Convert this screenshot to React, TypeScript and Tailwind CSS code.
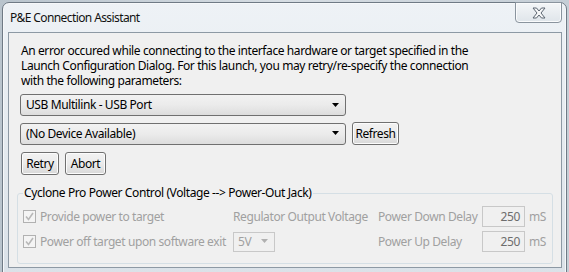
import React from 'react';

const font = { fontFamily: '"Noto Sans", "Open Sans", Arial, sans-serif' };

function Arrow({ color = '#000' }: { color?: string }) {
  return (
    <svg width="8" height="5" viewBox="0 0 8 5">
      <path d="M0 0 H7 L3.5 4 Z" fill={color} />
    </svg>
  );
}

function Combo({ label, width }: { label: string; width: string }) {
  return (
    <div
      className={`${width} h-[22px] flex items-center justify-between pl-[5px] pr-[5px] rounded-[3px] border border-[#707070] bg-gradient-to-b from-[#f2f2f2] via-[#ebebeb] to-[#dddddd] text-[12px] text-black`}
    >
      <span>{label}</span>
      <Arrow />
    </div>
  );
}

function Button({ label, width }: { label: string; width: string }) {
  return (
    <div
      className={`${width} h-[23px] flex items-center justify-center rounded-[3px] border border-[#707070] bg-gradient-to-b from-[#f2f2f2] via-[#ebebeb] to-[#d8d8d8] text-[12px] text-black shadow-[inset_0_0_0_1px_#fcfcfc]`}
    >
      {label}
    </div>
  );
}

function Check({ label }: { label: string }) {
  return (
    <div className="flex items-center gap-[4px] text-[12px] text-[#a0a0a0]">
      <div className="w-[13px] h-[13px] border border-[#b1b1b1] bg-[#f4f4f4] flex items-center justify-center">
        <svg width="9" height="9" viewBox="0 0 9 9">
          <path d="M1 4.5 L3.5 7.5 L8 1" stroke="#b8b8b8" strokeWidth="1.6" fill="none" />
        </svg>
      </div>
      <span>{label}</span>
    </div>
  );
}

function NumBox() {
  return (
    <div className="w-[43px] h-[21px] border border-[#c8c8c8] bg-[#f0f0f0] flex items-center justify-end pr-[4px] text-[12px] text-[#6d6d6d]">
      250
    </div>
  );
}

export default function App() {
  return (
    <div
      className="w-[569px] h-[272px] overflow-hidden whitespace-nowrap tracking-[-0.4px] bg-gradient-to-r from-[#b9c4cd] via-[#d6dde3] to-[#c5ced6]"
      style={font}
    >
      <div className="relative ml-[2px] mt-[2px] w-[565px] h-[280px] rounded-t-[7px] border border-[#6f7a85] bg-gradient-to-b from-[#eef2f6] via-[#e4eaef] to-[#dae1e8] shadow-[inset_0_0_0_1px_#f6f8fa]">
        {/* close button */}
        <div className="absolute right-[4px] top-[-1px] w-[47px] h-[21px] rounded-b-[4px] border border-[#8a949e] bg-gradient-to-b from-[#f4f6f8] to-[#dfe5ea] flex items-center justify-center shadow-[inset_0_0_0_1px_#fafbfc]">
          <svg width="14" height="12" viewBox="0 0 14 12">
            <path
              d="M1 1 H4.5 L7 4 L9.5 1 H13 L9 6 L13 11 H9.5 L7 8 L4.5 11 H1 L5 6 Z"
              fill="#f6f7f8"
              stroke="#5b6570"
              strokeWidth="1"
              strokeLinejoin="round"
            />
          </svg>
        </div>

        <div className="h-[29px] flex items-center pl-[7px] text-[12px] tracking-[-0.6px] text-[#111]">
          P&amp;E Connection Assistant
        </div>

        <div className="ml-[5px] w-[554px] h-[236px] border border-[#8d99a4] bg-[#f0f0f0] text-black">
          <div className="pl-[11px] pr-[8px] pt-[10px]">
            <p className="pl-[1px] text-[12px] leading-[15px]">
              An error occured while connecting to the interface hardware or target specified in the
              <br />
              Launch Configuration Dialog. For this launch, you may retry/re-specify the connection
              <br />
              with the following parameters:
            </p>

            <div className="mt-[6px]">
              <Combo label="USB Multilink - USB Port" width="w-[326px]" />
            </div>
            <div className="mt-[6px] flex items-center gap-[6px]">
              <Combo label="(No Device Available)" width="w-[326px]" />
              <Button label="Refresh" width="w-[47px]" />
            </div>
            <div className="mt-[7px] flex gap-[6px] pl-[1px]">
              <Button label="Retry" width="w-[38px]" />
              <Button label="Abort" width="w-[41px]" />
            </div>
          </div>

          {/* group box */}
          <div className="relative mt-[18px] ml-[8px] w-[536px] h-[71px] border border-[#d5dfe5] rounded-[3px]">
            <div className="absolute left-[5px] top-[-9px] px-[1px] bg-[#f0f0f0] text-[12px] leading-[15px] text-black">
              Cyclone Pro Power Control (Voltage --&gt; Power-Out Jack)
            </div>
            <div className="grid grid-cols-[210px_145px_104px_43px_auto] gap-y-[4px] items-center pl-[5px] pt-[12px] text-[12px] text-[#a0a0a0]">
              <Check label="Provide power to target" />
              <span>Regulator Output Voltage</span>
              <span>Power Down Delay</span>
              <NumBox />
              <span className="pl-[4px]">mS</span>

              <Check label="Power off target upon software exit" />
              <div className="w-[42px] h-[20px] border border-[#c8c8c8] bg-[#f0f0f0] flex items-center justify-between pl-[4px] pr-[5px]">
                <span>5V</span>
                <Arrow color="#b0b0b0" />
              </div>
              <span>Power Up Delay</span>
              <NumBox />
              <span className="pl-[4px]">mS</span>
            </div>
          </div>
        </div>
      </div>
    </div>
  );
}
